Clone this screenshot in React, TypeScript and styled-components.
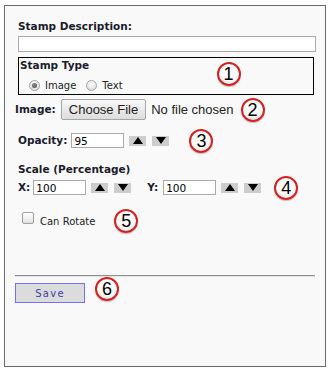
import React from 'react';
import styled, { createGlobalStyle } from 'styled-components';

const GlobalStyle = createGlobalStyle`
  html, body {
    margin: 0;
    padding: 0;
    background: #ffffff;
  }
  body {
    font-family: "DejaVu Sans", Verdana, sans-serif;
  }
`;

const Panel = styled.div`
  box-sizing: border-box;
  margin: 5px 0 0 4px;
  width: 322px;
  height: 362px;
  border: 1px solid #6b6b6b;
  background: #f9f9f9;
  padding: 14px 10px 0 13px;
`;

const FieldLabel = styled.div<{ $top?: number }>`
  font-size: 10.5px;
  line-height: 13px;
  font-weight: bold;
  color: #1b1b2c;
  margin-top: ${props => props.$top ?? 0}px;
  white-space: nowrap;
`;

const InlineLabel = styled.span<{ $gap?: number; $before?: number }>`
  font-size: 10.5px;
  line-height: 13px;
  font-weight: bold;
  color: #1b1b2c;
  margin-left: ${props => props.$before ?? 0}px;
  margin-right: ${props => props.$gap ?? 4}px;
  white-space: nowrap;
`;

const TextBox = styled.input<{ $width: number; $height?: number }>`
  box-sizing: border-box;
  display: block;
  width: ${props => props.$width}px;
  height: ${props => props.$height ?? 15}px;
  border: 1px solid #a9a9a9;
  background: #ffffff;
  padding: 0 2px;
  margin: 0;
  font-family: "DejaVu Sans", Verdana, sans-serif;
  font-size: 10.5px;
  color: #000;
  outline: none;
`;

const DescriptionField = styled.div`
  margin-top: 3px;
`;

const TypeBox = styled.div`
  box-sizing: border-box;
  width: 296px;
  height: 38px;
  margin-top: 5px;
  border: 1px solid #000;
  padding: 1px 0 0 1px;
`;

const RadioRow = styled.div`
  display: flex;
  align-items: center;
  height: 14px;
  margin: 6px 0 0 9px;
`;

const Radio = styled.span<{ $checked?: boolean }>`
  position: relative;
  box-sizing: border-box;
  width: 11px;
  height: 11px;
  border-radius: 50%;
  border: 1px solid #a4a4a4;
  background: radial-gradient(circle at 50% 35%, #ffffff 0%, #e6e6e6 60%, #cfcfcf 100%);
  margin-right: 5px;
  flex: none;

  &::after {
    content: '';
    display: ${props => (props.$checked ? 'block' : 'none')};
    position: absolute;
    left: 2px;
    top: 2px;
    width: 5px;
    height: 5px;
    border-radius: 50%;
    background: radial-gradient(circle at 40% 35%, #8a8a8a, #4a4a4a);
  }
`;

const OptionText = styled.span<{ $gap?: number }>`
  font-size: 10px;
  line-height: 13px;
  color: #222;
  margin-right: ${props => props.$gap ?? 0}px;
  white-space: nowrap;
`;

const Row = styled.div<{ $top: number; $left?: number; $height?: number }>`
  display: flex;
  align-items: center;
  height: ${props => props.$height ?? 15}px;
  margin-top: ${props => props.$top}px;
  margin-left: ${props => props.$left ?? 0}px;
`;

const FileButton = styled.button`
  box-sizing: border-box;
  height: 21px;
  padding: 0 7px;
  margin: 0 5px 0 5px;
  border: 1px solid #a6a6a6;
  border-radius: 2px;
  background: linear-gradient(#f7f7f7, #dddddd);
  font-family: "Liberation Sans", Arial, sans-serif;
  font-size: 13px;
  color: #222;
  white-space: nowrap;
`;

const FileStatus = styled.span`
  font-family: "Liberation Sans", Arial, sans-serif;
  font-size: 13px;
  color: #222;
  white-space: nowrap;
`;

const ArrowButton = styled.span<{ $gap?: number }>`
  display: flex;
  align-items: center;
  justify-content: center;
  width: 17px;
  height: 10px;
  background: #cdcdcd;
  margin-left: ${props => props.$gap ?? 6}px;
  flex: none;
`;

const Marker = styled.span<{ $gap: number; $dy?: number }>`
  box-sizing: border-box;
  display: flex;
  align-items: center;
  justify-content: center;
  width: 24px;
  height: 24px;
  flex: none;
  border-radius: 50%;
  border: 2px solid #d42222;
  background: radial-gradient(circle at 50% 35%, #ffffff 0%, #fbfbfb 55%, #d9d9d9 100%);
  box-shadow: 0 1px 1px rgba(0, 0, 0, 0.25);
  margin-left: ${props => props.$gap}px;
  margin-top: ${props => props.$dy ?? 0}px;
  font-family: "Liberation Sans", Arial, sans-serif;
  font-size: 18px;
  line-height: 1;
  color: #000;
`;

const CheckBox = styled.span`
  box-sizing: border-box;
  width: 12px;
  height: 12px;
  border: 1px solid #a0a0a0;
  border-radius: 2px;
  background: linear-gradient(#ffffff, #e2e2e2);
  margin: 0 6px 6px 4px;
  flex: none;
`;

const Divider = styled.div`
  width: 300px;
  height: 1px;
  margin: 45px 0 0 -3px;
  background: #929292;
  border-bottom: 1px solid #e2e2e2;
`;

const SaveRow = styled.div`
  display: flex;
  align-items: flex-start;
  margin: 6px 0 0 -3px;
`;

const SaveButton = styled.button`
  box-sizing: border-box;
  width: 70px;
  height: 20px;
  border: 1px solid #7272ea;
  background: #dcdcdc;
  color: #3c3ca8;
  font-family: "DejaVu Sans", Verdana, sans-serif;
  font-size: 10px;
  letter-spacing: 1.3px;
  padding: 0;
`;

const Up = () => (
  <svg width="10" height="7" viewBox="0 0 10 7">
    <polygon points="5,0 10,7 0,7" fill="#000" />
  </svg>
);

const Down = () => (
  <svg width="10" height="7" viewBox="0 0 10 7">
    <polygon points="0,0 10,0 5,7" fill="#000" />
  </svg>
);

const Spinner = () => (
  <>
    <ArrowButton $gap={5}>
      <Up />
    </ArrowButton>
    <ArrowButton $gap={6}>
      <Down />
    </ArrowButton>
  </>
);

const App: React.FC = () => {
  return (
    <>
      <GlobalStyle />
      <Panel>
        <FieldLabel>Stamp Description:</FieldLabel>
        <DescriptionField>
          <TextBox $width={298} $height={16} defaultValue="" />
        </DescriptionField>

        <TypeBox>
          <FieldLabel>Stamp Type</FieldLabel>
          <RadioRow>
            <Radio $checked />
            <OptionText $gap={10}>Image</OptionText>
            <Radio />
            <OptionText>Text</OptionText>
            <Marker $gap={94} $dy={-22}>1</Marker>
          </RadioRow>
        </TypeBox>

        <Row $top={4} $left={-3} $height={21}>
          <InlineLabel $gap={0}>Image:</InlineLabel>
          <FileButton type="button">Choose File</FileButton>
          <FileStatus>No file chosen</FileStatus>
          <Marker $gap={7}>2</Marker>
        </Row>

        <Row $top={13}>
          <InlineLabel $gap={4}>Opacity:</InlineLabel>
          <TextBox $width={53} defaultValue="95" />
          <Spinner />
          <Marker $gap={20}>3</Marker>
        </Row>

        <FieldLabel $top={15}>Scale (Percentage)</FieldLabel>
        <Row $top={4}>
          <InlineLabel $gap={3}>X:</InlineLabel>
          <TextBox $width={53} defaultValue="100" />
          <Spinner />
          <InlineLabel $gap={5} $before={16}>Y:</InlineLabel>
          <TextBox $width={53} defaultValue="100" />
          <Spinner />
          <Marker $gap={13}>4</Marker>
        </Row>

        <Row $top={17} $height={18}>
          <CheckBox />
          <OptionText>Can Rotate</OptionText>
          <Marker $gap={19}>5</Marker>
        </Row>

        <Divider />
        <SaveRow>
          <SaveButton type="button">Save</SaveButton>
          <Marker $gap={10} $dy={-6}>6</Marker>
        </SaveRow>
      </Panel>
    </>
  );
};

export default App;
